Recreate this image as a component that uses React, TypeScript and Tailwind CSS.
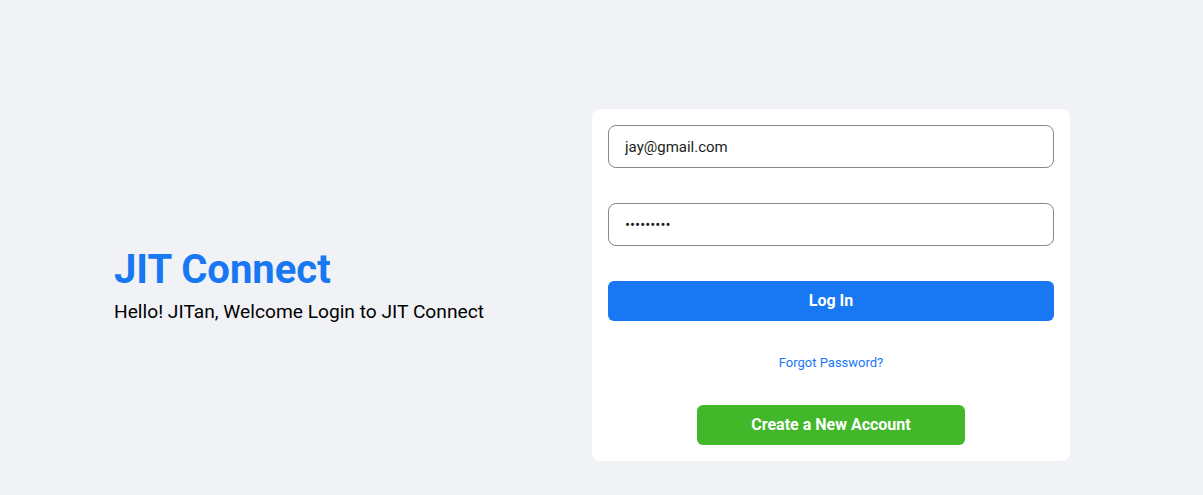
import { useState } from "react";

const LoginCard = () => {
	const [email, setEmail] = useState("jay@gmail.com");
	const [password, setPassword] = useState("123456789");

	return (
		<div className="w-[478px] rounded-lg bg-white p-4">
			<input
				type="text"
				value={email}
				onChange={(e) => setEmail(e.target.value)}
				className="block h-[43px] w-full rounded-lg border border-[#888888] px-4 text-[15px] text-[#1c1e21] outline-none"
			/>
			<input
				type="password"
				value={password}
				onChange={(e) => setPassword(e.target.value)}
				className="mt-[35px] block h-[43px] w-full rounded-lg border border-[#888888] px-4 text-[15px] text-[#1c1e21] outline-none"
			/>
			<button className="mt-[35px] h-10 w-full rounded-md bg-[#1877f2] text-base font-bold text-white">
				Log In
			</button>
			<div className="mt-[33px] text-center leading-4">
				<a href="#" className="text-[13px] text-[#1877f2]">
					Forgot Password?
				</a>
			</div>
			<div className="mt-[34px] flex justify-center">
				<button className="h-10 w-[268px] rounded-md bg-[#42b72a] text-base font-bold text-white">
					Create a New Account
				</button>
			</div>
		</div>
	);
};

export default function App() {
	return (
		<div className="min-h-screen bg-[#f0f2f5] font-['Roboto',sans-serif]">
			<div className="flex items-center pl-[114px] pt-[109px]">
				<div className="w-[478px]">
					<h1 className="text-[40px] font-bold leading-[48px] text-[#1877f2]">
						JIT Connect
					</h1>
					<p className="mt-[6px] text-[19.2px] leading-6 text-black">
						Hello! JITan, Welcome Login to JIT Connect
					</p>
				</div>
				<LoginCard />
			</div>
		</div>
	);
}
